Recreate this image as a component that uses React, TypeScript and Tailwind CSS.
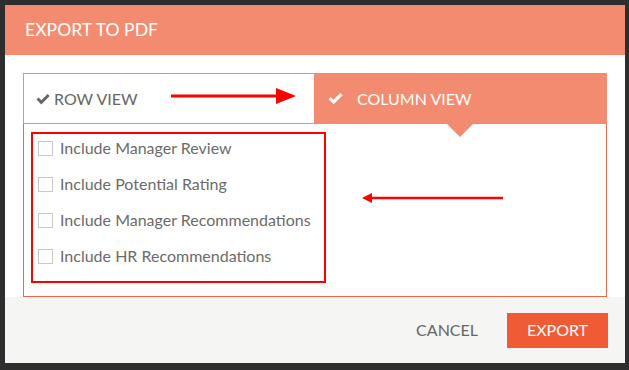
import { useState } from 'react';

const options = [
  'Include Manager Review',
  'Include Potential Rating',
  'Include Manager Recommendations',
  'Include HR Recommendations',
];

function Check({ className }: { className?: string }) {
  return (
    <svg viewBox="0 0 16 16" className={className} fill="currentColor">
      <path d="M1.5 8.6 L3.6 6.5 L6.3 9.2 L12.6 2.9 L14.7 5 L6.3 13.4 Z" />
    </svg>
  );
}

export default function App() {
  const [view, setView] = useState<'row' | 'column'>('column');
  const [checked, setChecked] = useState<boolean[]>([false, false, false, false]);

  return (
    <div
      className="w-[629px] h-[370px] bg-[#2e2e2e] p-[5px] pr-[4px] pb-[7px]"
      style={{ fontFamily: 'Lato, "Open Sans", sans-serif' }}
    >
      <div className="flex flex-col h-full bg-white">
        {/* Header */}
        <div className="h-[50px] bg-[#f38b70] flex items-center px-5">
          <h1 className="text-white text-[17.6px]">EXPORT TO PDF</h1>
        </div>

        {/* Body */}
        <div className="flex-1 px-[18px] pt-[18px] bg-white">
          <div className="relative">
            <div className="flex h-[51px]">
              <button
                onClick={() => setView('row')}
                className={
                  view === 'row'
                    ? 'w-[291px] flex items-center gap-2 pl-[12px] bg-[#f38b70] text-white text-[16px]'
                    : 'w-[291px] flex items-center gap-[3px] pl-[11px] border border-[#f38b70] border-r-0 bg-white text-[#666] text-[16px]'
                }
              >
                <Check className="w-[16px] h-[16px] text-[#666]" />
                ROW VIEW
              </button>
              <button
                onClick={() => setView('column')}
                className="relative flex-1 flex items-center gap-[13px] pl-[13px] bg-[#f38b70] text-white text-[16px]"
              >
                <Check className="w-[17px] h-[17px]" />
                COLUMN VIEW
                <span className="absolute left-[133px] top-[51px] w-0 h-0 border-l-[13px] border-r-[13px] border-t-[13px] border-l-transparent border-r-transparent border-t-[#f38b70]" />
              </button>
            </div>

            {/* annotation arrow right */}
            <svg className="absolute left-[145px] top-[15px]" width="130" height="16" viewBox="0 0 130 16">
              <line x1="3" y1="8" x2="112" y2="8" stroke="#f00" strokeWidth="3" />
              <polygon points="108,0 128,8 108,16" fill="#f00" />
            </svg>

            <div className="h-[173px] border border-[#ef6748] border-t-0 bg-white pl-[7px] pt-[8px]">
              <div className="w-[295px] h-[151px] border-2 border-[#f00] pl-[5px] flex flex-col gap-[8px]">
                {options.map((label, i) => (
                  <label key={label} className="flex items-center h-[28px] gap-[7px] cursor-pointer">
                    <input
                      type="checkbox"
                      className="sr-only"
                      checked={checked[i]}
                      onChange={() => setChecked(checked.map((c, j) => (j === i ? !c : c)))}
                    />
                    <span className="w-[15px] h-[15px] border border-[#c8c8c8] bg-white" />
                    <span className="text-[16px] text-[#6b6b6b]">{label}</span>
                  </label>
                ))}
              </div>
            </div>

            {/* annotation arrow left */}
            <svg className="absolute left-[339px] top-[120px]" width="141" height="10" viewBox="0 0 141 10">
              <polygon points="0,5 10,0 10,10" fill="#f00" />
              <line x1="8" y1="5" x2="141" y2="5" stroke="#f00" strokeWidth="2.5" />
            </svg>
          </div>
        </div>

        {/* Footer */}
        <div className="h-[66px] bg-[#f5f5f3] flex items-center justify-end gap-[29px] pr-[17px]">
          <button className="text-[16px] text-[#666]">CANCEL</button>
          <button className="w-[101px] h-[35px] bg-[#f05a35] text-white text-[16px]">EXPORT</button>
        </div>
      </div>
    </div>
  );
}
